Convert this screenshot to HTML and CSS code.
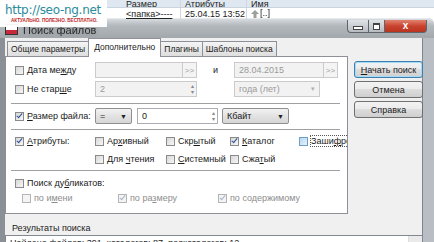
FILE: index.html
```html
<!DOCTYPE html>
<html lang="ru">
<head>
    <meta charset="UTF-8">
    <title>Поиск файлов</title>
    <link rel="stylesheet" href="styles.css">
</head>
<body>
    <div class="filelist">
        <div class="fl-head">
            <span class="col-size">Размер</span>
            <span class="col-attr">Атрибуты</span>
            <span class="col-name">Имя</span>
        </div>
        <div class="fl-row">
            <span class="col-size">&lt;папка&gt;----</span>
            <span class="col-attr">25.04.15 13:52</span>
            <span class="col-name">
                <svg width="8" height="8" viewBox="0 0 8 8"><path d="M4 0 L8 4 L5.5 4 L5.5 8 L2.5 8 L2.5 4 L0 4 Z" fill="#9aa09a"/></svg>[..]
            </span>
        </div>
    </div>

    <div class="watermark">
        <div class="wm-url">http://seo-ng.net</div>
        <div class="wm-tag">АКТУАЛЬНО. ПОЛЕЗНО. БЕСПЛАТНО.</div>
    </div>

    <div class="window">
        <div class="titlebar">
            <svg class="title-icon" width="13" height="11" viewBox="0 0 13 11">
                <rect x="0.5" y="0.5" width="12" height="10" fill="#fff" stroke="#333"/>
                <rect x="1" y="6" width="11" height="4" fill="#c8283a"/>
            </svg>
            <span class="title">Поиск файлов</span>
            <div class="controls">
                <span class="ctl ctl-min"><i></i></span>
                <span class="ctl ctl-max"><i></i></span>
                <span class="ctl ctl-close">x</span>
            </div>
        </div>

        <div class="client">
            <div class="main">
                <div class="tabs-area">
                    <div class="tabs">
                        <span class="tab">Общие параметры</span>
                        <span class="tab active">Дополнительно</span>
                        <span class="tab">Плагины</span>
                        <span class="tab">Шаблоны поиска</span>
                    </div>
                    <div class="panel">
                        <div class="row row-date">
                            <label class="chk lbl"><span class="box"></span><span>Дата ме<u>ж</u>ду</span></label>
                            <span class="field dis w88"></span>
                            <span class="more">&gt;&gt;</span>
                            <span class="and">и</span>
                            <span class="field dis w90">28.04.2015</span>
                            <span class="more">&gt;&gt;</span>
                        </div>
                        <div class="row row-age">
                            <label class="chk lbl"><span class="box"></span><span>Не стар<u>ш</u>е</span></label>
                            <span class="field dis w102">2<span class="spin"><b>&#9652;</b><b>&#9662;</b></span></span>
                            <span class="combo dis w86">года (лет)<span class="arrow">&#9662;</span></span>
                        </div>
                        <div class="sep"></div>
                        <div class="row row-size">
                            <label class="chk lbl"><span class="box on"></span><span><u>Р</u>азмер файла:</span></label>
                            <span class="combo btnlike w37">=<span class="arrow">&#9660;</span></span>
                            <span class="field w81">0<span class="spin"><b>&#9652;</b><b>&#9662;</b></span></span>
                            <span class="combo btnlike w67">Кбайт<span class="arrow">&#9660;</span></span>
                        </div>
                        <div class="sep"></div>
                        <div class="row row-attr">
                            <label class="chk lbl"><span class="box on"></span><span><u>А</u>трибуты:</span></label>
                            <label class="chk a1"><span class="box"></span><span>Ар<u>х</u>ивный</span></label>
                            <label class="chk a2"><span class="box"></span><span>Скр<u>ы</u>тый</span></label>
                            <label class="chk a3"><span class="box on"></span><span><u>К</u>аталог</span></label>
                            <label class="chk a4"><span class="box hover"></span><span class="focus">Заши<u>ф</u>рованный</span></label>
                        </div>
                        <div class="row row-attr2">
                            <span class="lbl"></span>
                            <label class="chk a1"><span class="box"></span><span>Для <u>ч</u>тения</span></label>
                            <label class="chk a2"><span class="box"></span><span><u>С</u>истемный</span></label>
                            <label class="chk a3"><span class="box"></span><span>Сжа<u>т</u>ый</span></label>
                        </div>
                        <div class="sep"></div>
                        <div class="row row-dup">
                            <label class="chk"><span class="box"></span><span>Поиск ду<u>б</u>ликатов:</span></label>
                        </div>
                        <div class="row row-dup2">
                            <label class="chk d1 off"><span class="box"></span><span>по и<u>м</u>ени</span></label>
                            <label class="chk d2 off"><span class="box on"></span><span>по ра<u>з</u>меру</span></label>
                            <label class="chk d3 off"><span class="box on"></span><span>по содержимому</span></label>
                        </div>
                    </div>
                </div>
                <div class="buttons">
                    <span class="btn default"><span><u>Н</u>ачать поиск</span></span>
                    <span class="btn">Отмена</span>
                    <span class="btn">Справка</span>
                </div>
            </div>
            <div class="results-label">Результаты поиска</div>
            <div class="results">
                <span>Найдено файлов: 391, каталогов: 87, подкаталогов: 12</span>
                <span class="scroll"></span>
            </div>
        </div>
    </div>
</body>
</html>
```

FILE: styles.css
```css
body {
    margin: 0;
    width: 434px;
    height: 242px;
    overflow: hidden;
    position: relative;
    font-family: 'Liberation Sans', Arial, sans-serif;
    font-size: 9px;
    color: #1b1b1b;
    background: #fff;
}
u {
    text-decoration: underline;
    text-underline-offset: 1px;
}

/* файловая панель позади окна */
.filelist {
    height: 18px;
    background: #fff;
    font-size: 9px;
    color: #222;
}
.fl-head, .fl-row {
    display: flex;
    padding-left: 122px;
}
.fl-head {
    height: 7px;
    line-height: 8px;
    background: #dfe8f1;
    border-bottom: 1px solid #c9d4de;
    overflow: hidden;
}
.fl-row {
    height: 11px;
    line-height: 13px;
}
.col-size {
    width: 54px;
    padding-left: 4px;
    border-right: 1px solid #cfd8e0;
}
.col-attr {
    width: 61px;
    padding-left: 4px;
    border-right: 1px solid #cfd8e0;
    white-space: nowrap;
    overflow: hidden;
}
.col-name {
    padding-left: 4px;
    display: flex;
    align-items: center;
    gap: 1px;
}
.fl-row .col-size {
    text-decoration: underline;
}

.watermark {
    position: absolute;
    left: 0;
    top: 0;
    width: 107px;
    height: 27px;
    background: rgba(255, 255, 255, 0.95);
    z-index: 5;
}
.wm-url {
    font-family: 'DejaVu Sans', sans-serif;
    font-size: 12px;
    color: #2b8c9c;
    padding: 4px 0 0 5px;
    line-height: 13px;
    letter-spacing: -0.3px;
}
.wm-tag {
    font-family: 'Liberation Sans', sans-serif;
    font-weight: bold;
    font-size: 4.6px;
    color: #c3262b;
    padding-left: 11px;
    line-height: 7px;
}

/* окно */
.window {
    border-left: 5px solid #8b9096;
    border-right: 11px solid #b9bec4;
    border-top-right-radius: 6px;
    background: #f0f0f0;
    height: 224px;
    box-shadow: inset -1px 0 0 #7f858c;
}
.titlebar {
    height: 20px;
    display: flex;
    align-items: center;
    background: linear-gradient(#d7dbe0, #b3b8bd 35%, #a3a8ad);
    margin-right: -11px;
    border-top-right-radius: 7px;
    margin-left: -5px;
    padding-left: 5px;
    border-top: 1px solid #e8ebee;
    box-sizing: border-box;
}
.title-icon {
    margin-top: 2px;
}
.title {
    margin-left: 5px;
    margin-top: 2px;
    font-size: 11px;
    color: #2a2a2a;
    text-shadow: 0 0 3px #9ea3a8, 0 0 5px #888;
    filter: blur(0.5px);
}
.controls {
    margin-left: auto;
    margin-right: 7px;
    display: flex;
    align-self: flex-start;
    margin-top: 1px;
}
.ctl {
    height: 12px;
    border: 1px solid #5f656c;
    border-top: none;
    display: flex;
    align-items: center;
    justify-content: center;
    background: linear-gradient(#dfe3e7, #b7bcc2);
}
.ctl-min {
    width: 20px;
    border-bottom-left-radius: 4px;
}
.ctl-min i {
    width: 8px;
    height: 2px;
    border: 1px solid #444;
    margin-top: 3px;
    background: #fff;
}
.ctl-max {
    width: 15px;
    border-left: none;
}
.ctl-max i {
    width: 5px;
    height: 4px;
    border: 1px solid #444;
    border-top-width: 2px;
    background: #fff;
}
.ctl-close {
    width: 41px;
    border-left: none;
    border-bottom-right-radius: 4px;
    background: linear-gradient(#e2826f, #c9442f 50%, #b8351f);
    color: #fff;
    font-weight: bold;
    font-size: 10px;
    line-height: 10px;
}

.client {
    display: flex;
    flex-direction: column;
}
.main {
    display: flex;
}
.tabs-area {
    width: 343px;
}
.tabs {
    display: flex;
    align-items: flex-end;
    height: 18px;
    padding-left: 2px;
    font-size: 8.5px;
}
.tab {
    height: 14px;
    line-height: 14px;
    padding: 0 3px;
    border: 1px solid #8d9098;
    border-bottom: none;
    margin-right: -1px;
    background: linear-gradient(#f4f4f4, #dedede);
    white-space: nowrap;
}
.tab.active {
    height: 18px;
    line-height: 17px;
    background: #fff;
    position: relative;
    z-index: 1;
    margin-bottom: -1px;
    padding: 0 5px;
}
.panel {
    height: 151px;
    border: 1px solid #8d9098;
    background: #fff;
    padding: 5px 0 0 9px;
    overflow: hidden;
}

.row {
    display: flex;
    align-items: center;
    height: 16px;
    white-space: nowrap;
}
.row-age {
    margin-top: 3px;
}
.row-size {
    margin-top: 4px;
}
.row-attr, .row-attr2, .row-dup, .row-dup2 {
    height: 14px;
}
.row-attr {
    margin-top: 4px;
}
.row-attr2 {
    margin-top: 4px;
}
.row-dup {
    margin-top: 5px;
}
.row-dup2 {
    margin-top: 1px;
}
.sep {
    height: 1px;
    background: #a0a0a0;
    margin: 6px 7px 0 -4px;
}
.row-size + .sep {
    margin-top: 5px;
}
.row-attr2 + .sep {
    margin-top: 4px;
}

.lbl {
    width: 80px;
    flex: none;
}
.chk {
    display: flex;
    align-items: center;
    gap: 3px;
}
.box {
    width: 9px;
    height: 9px;
    box-sizing: border-box;
    border: 1px solid #8a8a8a;
    background: linear-gradient(135deg, #d7d7d7, #f7f7f7);
    flex: none;
    position: relative;
}
.box.on::after {
    content: '';
    position: absolute;
    left: 2px;
    top: -1px;
    width: 2px;
    height: 5px;
    border: solid #2c4f9c;
    border-width: 0 1.5px 1.5px 0;
    transform: rotate(40deg);
}
.box.hover {
    border-color: #6c9fc8;
    background: linear-gradient(135deg, #b8d8f0, #e6f3fb);
}
.focus {
    outline: 1px dotted #555;
    outline-offset: 0;
}
.off {
    color: #8d8d8d;
}
.off .box {
    border-color: #b5b5b5;
    background: #f4f4f4;
}
.off .box.on::after {
    border-color: #a7b3c8;
}

.a1 { width: 71px; flex: none; }
.a2 { width: 64px; flex: none; }
.a3 { width: 69px; flex: none; }
.d1 { margin-left: 7px; width: 96px; }
.d2 { width: 100px; }

.field, .combo {
    height: 16px;
    box-sizing: border-box;
    border: 1px solid #abadb3;
    background: #fff;
    display: flex;
    align-items: center;
    padding-left: 4px;
    position: relative;
    flex: none;
}
.dis {
    background: #f2f2f2;
    border-color: #cbcbcb;
    color: #9a9a9a;
}
.w88 { width: 88px; }
.w90 { width: 90px; }
.w102 { width: 102px; }
.w86 { width: 86px; margin-left: 37px; }
.w37 { width: 37px; }
.w81 { width: 81px; margin-left: 5px; }
.w67 { width: 67px; margin-left: 4px; }
.more {
    width: 14px;
    height: 16px;
    box-sizing: border-box;
    border: 1px solid #cbcbcb;
    border-left: none;
    background: #f4f4f4;
    color: #a0a0a0;
    font-size: 8px;
    display: flex;
    align-items: center;
    justify-content: center;
}
.and {
    width: 37px;
    padding-left: 16px;
    box-sizing: border-box;
}
.spin {
    margin-left: auto;
    width: 8px;
    display: flex;
    flex-direction: column;
    font-size: 6px;
    line-height: 6px;
    color: #888;
    align-items: center;
}
.spin b {
    font-weight: normal;
}
.arrow {
    margin-left: auto;
    margin-right: 4px;
    font-size: 7px;
    color: #222;
}
.dis .arrow {
    color: #b0b0b0;
}
.btnlike {
    background: linear-gradient(#f3f3f3, #e2e2e2 50%, #d6d6d6);
    border-color: #8e8f92;
    border-radius: 2px;
}

.buttons {
    margin-left: 6px;
    padding-top: 23px;
    display: flex;
    flex-direction: column;
    gap: 3px;
}
.btn {
    width: 69px;
    height: 17px;
    box-sizing: border-box;
    border: 1px solid #707070;
    border-radius: 3px;
    background: linear-gradient(#f3f3f3, #ebebeb 45%, #dddddd 50%, #cfcfcf);
    display: flex;
    align-items: center;
    justify-content: center;
}
.btn.default {
    border-color: #3c7fb1;
    box-shadow: inset 0 0 0 1px #a6dbf5;
}

.results-label {
    margin: 8px 0 0 7px;
    line-height: 12px;
}
.results {
    margin-top: 1px;
    height: 20px;
    border: 1px solid #828790;
    background: #fff;
    display: flex;
    padding-left: 4px;
    line-height: 12px;
    padding-top: 1px;
}
.scroll {
    margin-left: auto;
    width: 13px;
    background: #eaeaea;
    border-left: 1px solid #ddd;
    margin-top: -1px;
}
```
